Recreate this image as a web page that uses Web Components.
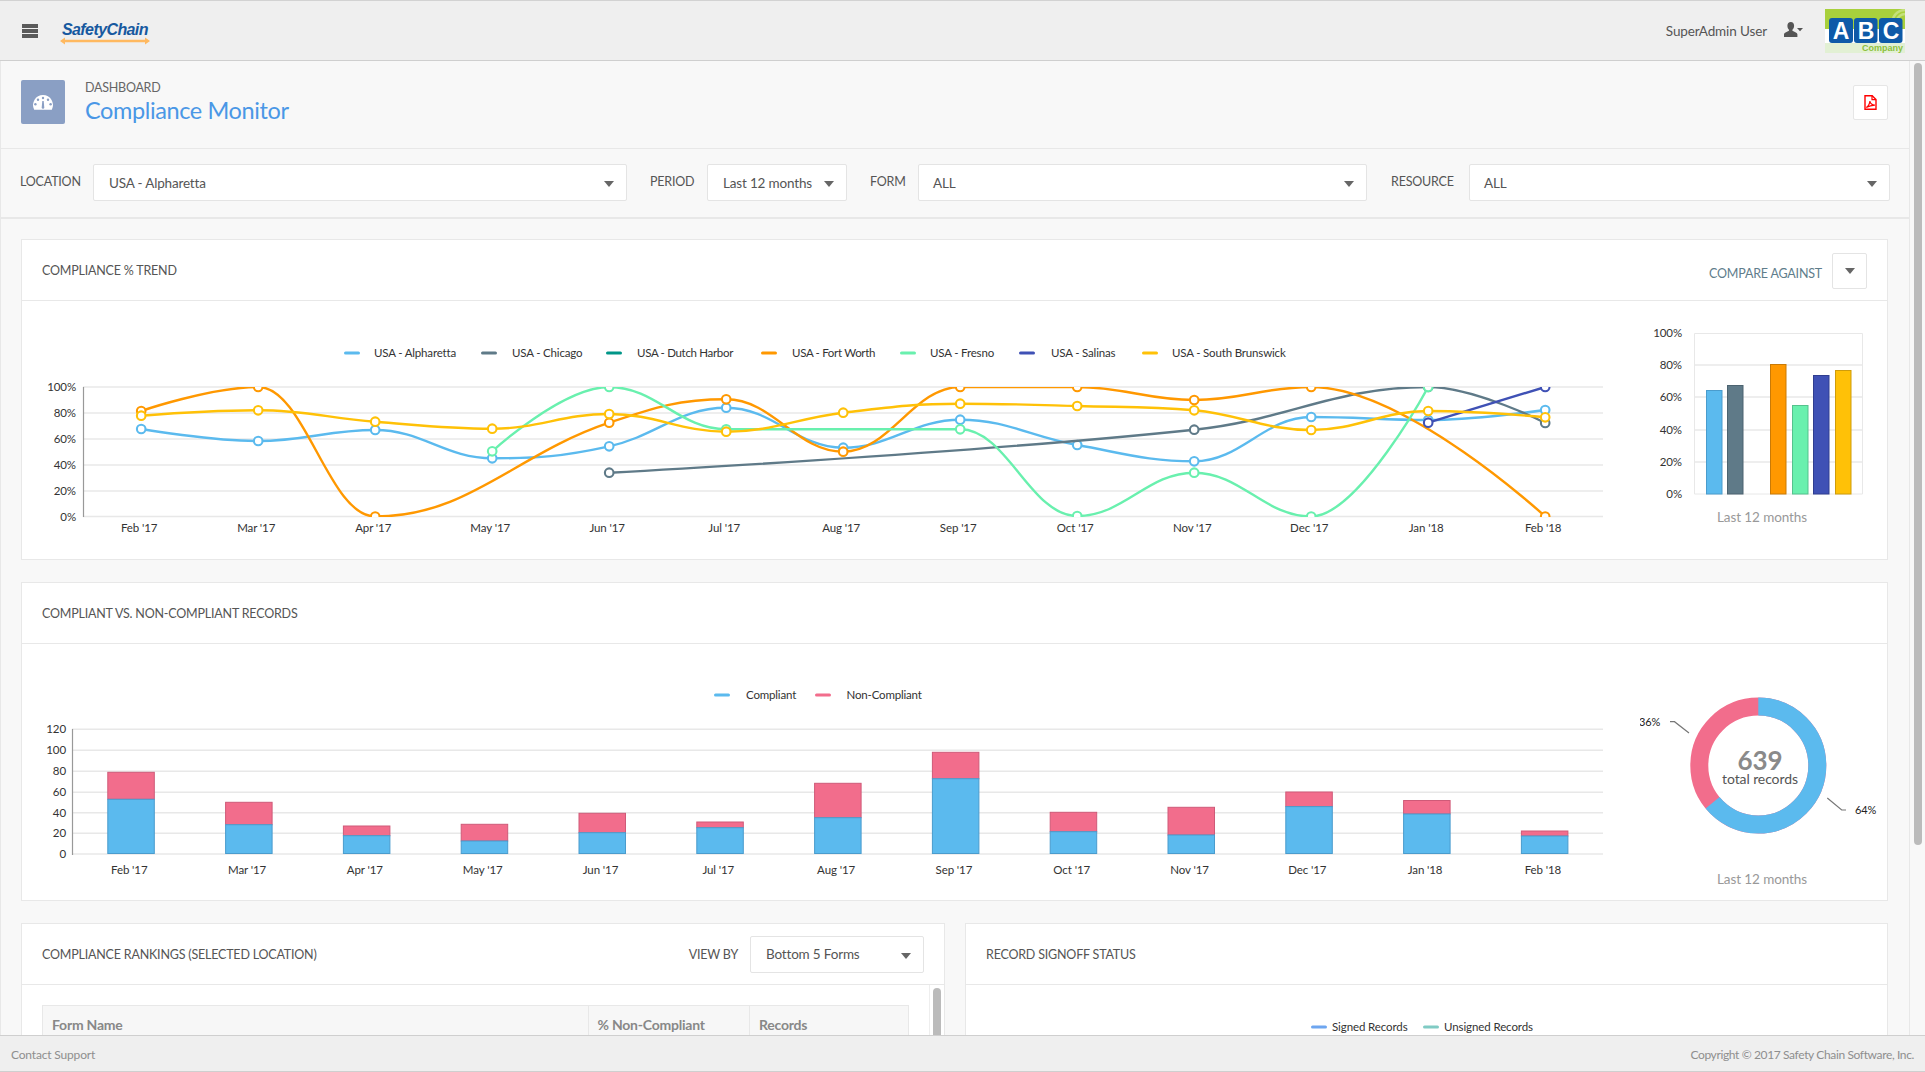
<!DOCTYPE html>
<html lang="en"><head><meta charset="utf-8"><title>Compliance Monitor</title>
<style>
html,body{margin:0;padding:0;height:100%;overflow:hidden;font-family:Lato,"Noto Sans",sans-serif;color:#555}
</style></head><body>
<sc-app></sc-app>
<script>
const FONT='Lato,"Noto Sans",sans-serif';
function def(name,css,html){
  customElements.define(name,class extends HTMLElement{
    constructor(){super();const r=this.attachShadow({mode:'open'});
      r.innerHTML='<style>'+css+'</style>'+(typeof html==='function'?html(this):html);}
  });
}
function spline(p){
  const s=1.5,den=2.5,n=p.length,lc=[],rc=[];
  for(let i=0;i<n;i++){
    const [x,y]=p[i];
    if(i===0||i===n-1){lc[i]=[x,y];rc[i]=[x,y];continue;}
    const [px,py]=p[i-1],[nx,ny]=p[i+1];
    let lx=(s*x+px)/den,ly=(s*y+py)/den,rx=(s*x+nx)/den,ry=(s*y+ny)/den;
    const c=((ry-ly)*(rx-x))/(rx-lx)+y-ry;ly+=c;ry+=c;
    if(ly>py&&ly>y){ly=Math.max(py,y);ry=2*y-ly}else if(ly<py&&ly<y){ly=Math.min(py,y);ry=2*y-ly}
    if(ry>ny&&ry>y){ry=Math.max(ny,y);ly=2*y-ry}else if(ry<ny&&ry<y){ry=Math.min(ny,y);ly=2*y-ry}
    lc[i]=[lx,ly];rc[i]=[rx,ry];
  }
  let d='M'+p[0][0]+' '+p[0][1];
  for(let i=1;i<n;i++)d+='C'+rc[i-1].join(' ')+' '+lc[i].join(' ')+' '+p[i].join(' ');
  return d;
}
const months=["Feb '17","Mar '17","Apr '17","May '17","Jun '17","Jul '17","Aug '17","Sep '17","Oct '17","Nov '17","Dec '17","Jan '18","Feb '18"];
const svgCss=`:host{display:block;flex:none}svg{display:block;overflow:hidden}text{font-family:${FONT};font-size:11.5px;fill:#333;letter-spacing:-.1px}
.cap{font-size:13.5px;fill:#999;letter-spacing:-.1px}.lg{font-size:11.5px;letter-spacing:-.17px}.lgt{font-size:11.5px;letter-spacing:-.32px}`;

def('sc-topbar',`:host{display:flex;align-items:center;box-sizing:border-box;border-top:1px solid #d2d2d2;background:#efefef;border-bottom:1px solid #cfcfcf;height:61px;padding-left:22px;flex:none;font-family:${FONT}}
.burger{width:16px;display:flex;flex-direction:column;gap:1px;margin-top:1px}.burger i{display:block;height:4px;background:#5a5a5a}
.logo{margin-left:22px;width:90px}
.logo span{display:block;font:italic bold 16px/20px "Liberation Sans",sans-serif;color:#17599f;letter-spacing:-.6px;padding-left:2px;margin-top:4px}
.logo svg{display:block;margin-top:-3px}
.sp{flex:1}.user{font-size:13.5px;color:#555;letter-spacing:-.12px}
.ui{margin:-2px 22px 0 17px;display:block}.abc{display:block;margin-right:20px;margin-top:1px}
.abc text{font-family:"Liberation Sans",sans-serif;font-weight:bold}`,
`<div class="burger"><i></i><i></i><i></i></div>
<div class="logo"><span>SafetyChain</span><svg width="90" height="8" viewBox="0 0 90 8"><path d="M4 4H86" stroke="#ffb960" stroke-width="2.4"/><path d="M0 4l5-3.6v7.2zM90 4l-5-3.6v7.2z" fill="#ffb960"/></svg></div>
<div class="sp"></div><div class="user">SuperAdmin User</div>
<svg class="ui" width="19" height="15" viewBox="0 0 19 15"><path d="M6.8 0c2.1 0 3.3 1.6 3.3 3.7 0 1.5-.6 3-1.5 3.9-.4.5-.3 1.2.3 1.5 1.9.9 4.5 1.7 4.5 3.2V15H0v-2.7c0-1.500 2.600-2.300 4.500-3.200.6-.3.700-1 .3-1.500C3.900 6.700 3.400 5.200 3.400 3.700 3.400 1.600 4.700 0 6.800 0z" fill="#555"/><path d="M13 6h6l-3 3.200z" fill="#555"/></svg>
<svg class="abc" width="80" height="44" viewBox="0 0 80 44"><rect width="80" height="20" fill="#a8d03c"/><rect y="20" width="80" height="14" fill="#fff"/><rect y="34" width="80" height="10" fill="#e2f0d4"/>
<path d="M68 9a14 14 0 0 1 12-8M72 11a9 9 0 0 1 8-6" stroke="#c4e07c" stroke-width="2.5" fill="none"/>
<g fill="#0e5aa8"><rect x="4" y="9" width="24" height="25" rx="3"/><rect x="29" y="9" width="23.5" height="25" rx="3"/><rect x="54" y="9" width="23.5" height="25" rx="3"/></g>
<g fill="#fff" font-size="23" text-anchor="middle"><text x="16" y="30">A</text><text x="41" y="30">B</text><text x="66" y="30">C</text></g>
<text x="78" y="42" text-anchor="end" font-size="9" fill="#8cc03c">Company</text></svg>`);

def('sc-page-head',`:host{display:flex;box-sizing:border-box;height:88px;padding:19px 21px 0 20px;border-bottom:1px solid #e8e8e8;background:#f8f8f8;flex:none}
.ic{width:44px;height:44px;background:#8a9fc4;border-radius:2px;display:flex;align-items:center;justify-content:center}
.t{margin:1px 0 0 20px;flex:1}.d{font-size:12.5px;line-height:14px;color:#666;letter-spacing:-.25px}.h{font-size:23.5px;line-height:30px;color:#4a97e6;letter-spacing:-.38px}
.pdf{width:35px;height:35px;box-sizing:border-box;background:#fff;border:1px solid #e6e6e6;border-radius:2px;margin-top:5px;display:flex;align-items:center;justify-content:center}`,
`<div class="ic"><svg width="22" height="15" viewBox="0 0 22 15"><path d="M2.2 14.75A10 10 0 1 1 19.8 14.75z" fill="#fff"/><g fill="#8a9fc4"><circle cx="11" cy="3" r="1.2"/><circle cx="6" cy="4.7" r="1.2"/><circle cx="16" cy="4.7" r="1.2"/><circle cx="3.4" cy="9.3" r="1.2"/><circle cx="18.6" cy="9.3" r="1.2"/><path d="M10.3 6h1.400l.6 6.500a1.300 1.300 0 1 1-2.600 0z"/></g></svg></div>
<div class="t"><div class="d">DASHBOARD</div><div class="h">Compliance Monitor</div></div>
<div class="pdf"><svg width="13" height="15" viewBox="0 0 13 15"><path d="M1 .7h7.200L12 4.500v9.800H1z" fill="none" stroke="#f00" stroke-width="1.4"/><path d="M8 .7v4h4" fill="none" stroke="#f00" stroke-width="1.2"/><path d="M2.200 12.500c2-1 3.300-3.500 3.700-6.300.4 2.200 2.200 3.800 5 3.900-2.800.1-6 .9-8.700 2.400z" fill="none" stroke="#f00" stroke-width="1.1"/></svg></div>`);

def('sc-select',`:host{display:flex;align-items:center;box-sizing:border-box;height:37px;background:#fff;border:1px solid #e4e4e4;border-radius:2px;padding:0 12px 0 15px;font-size:13.5px;color:#555;letter-spacing:-.17px;flex:none}
.v{flex:1;white-space:nowrap}.c{width:0;height:0;border:5.5px solid transparent;border-top:6.5px solid #666;border-bottom:0;margin-top:3px}`,
`<div class="v"><slot></slot></div><div class="c"></div>`);

def('sc-filter-bar',`:host{display:flex;align-items:center;box-sizing:border-box;height:70px;padding:0 0 1px 19px;border-bottom:2px solid #e8e8e8;background:#f8f8f8;flex:none}
.l{font-size:12.5px;color:#555;letter-spacing:-.2px;flex:none;margin-top:-2px}`,
`<div class="l" style="width:73px">LOCATION</div><sc-select style="width:534px">USA - Alpharetta</sc-select>
<div class="l" style="margin-left:23px;width:57px">PERIOD</div><sc-select style="width:140px">Last 12 months</sc-select>
<div class="l" style="margin-left:23px;width:48px">FORM</div><sc-select style="width:449px;padding-left:14px">ALL</sc-select>
<div class="l" style="margin-left:24px;width:78px">RESOURCE</div><sc-select style="width:421px;padding-left:14px">ALL</sc-select>`);

def('sc-card',`:host{display:block;box-sizing:border-box;background:#fff;border:1px solid #e8e8e8;min-width:0}
.hd{display:flex;align-items:center;height:60px;box-sizing:content-box;border-bottom:1px solid #e8e8e8;padding:0 20px}
.ti{flex:1;font-size:12.5px;color:#555;letter-spacing:-.2px;white-space:nowrap}`,
c=>`<div class="hd"><div class="ti">${c.getAttribute('heading')}</div><slot name="actions"></slot></div><slot></slot>`);

def('sc-compare',`:host{display:flex;align-items:center;margin-top:2px}
.l{font-size:12.5px;color:#607d8b;letter-spacing:-.2px;margin:5px 10px 0 0}
.b{width:35px;height:36px;box-sizing:border-box;border:1px solid #e4e4e4;border-radius:2px;display:flex;align-items:center;justify-content:center}
.b i{display:block;width:0;height:0;border:5.5px solid transparent;border-top:6.5px solid #666;border-bottom:0}`,
`<div class="l">COMPARE AGAINST</div><div class="b"><i></i></div>`);

def('sc-view-by',`:host{display:flex;align-items:center}.l{font-size:12.5px;color:#555;letter-spacing:-.2px;margin-right:12px}`,
`<div class="l">VIEW BY</div><sc-select style="width:174px">Bottom 5 Forms</sc-select>`);

def('sc-trend-chart',svgCss,()=>{
  const X=i=>141.2+117*i;
  let g='';
  [387,413,439,465,491,516.5].forEach((y,i)=>{
    g+=`<path d="M83 ${y}H1603" stroke="#e8e8e8" stroke-width="1.6"/><text x="76" y="${y+4}" text-anchor="end">${100-i*20}%</text>`;
  });
  g+=`<path d="M83.5 387V517" stroke="#999" stroke-width="1.2"/>`;
  months.forEach((m,i)=>g+=`<text x="${X(i)-2}" y="532" text-anchor="middle">${m}</text>`);
  const series=[
   ['#5bbaee',[[0,429],[1,441],[2,430],[3,458.3],[4,446.3],[5,407.7],[6,447.7],[7,419.7],[8,445],[9,461.3],[10,417],[11,420],[12,410]]],
   ['#5f7a88',[[4,472.7],[9,429.7],[11,387],[12,423]]],
   ['#ff9800',[[0,411],[1,387],[2,516.5],[4,422.7],[5,399.3],[6,451.7],[7,387],[8,387],[9,400],[10,387],[12,516.5]]],
   ['#69f0ae',[[3,451.3],[4,387],[5,429.3],[7,429.3],[8,516],[9,472.7],[10,516.5],[11,387]]],
   ['#3f51b5',[[11,422.7],[12,387]]],
   ['#ffc107',[[0,415.7],[1,410.3],[2,421.7],[3,428.7],[4,414],[5,431.7],[6,412.7],[7,403.7],[8,406],[9,410.3],[10,430],[11,411],[12,417.3]]]
  ];
  let s='';
  series.forEach(([c,pts])=>{
    const p=pts.map(([i,y])=>[+X(i).toFixed(1),y]);
    s+=`<path d="${spline(p)}" fill="none" stroke="${c}" stroke-width="2.4"/>`;
    p.forEach(q=>s+=`<circle cx="${q[0]}" cy="${q[1]}" r="4.3" fill="#fff" stroke="${c}" stroke-width="2.1"/>`);
  });
  const lg=[[344,374,'#5bbaee','USA - Alpharetta','lg'],[481,512,'#5f7a88','USA - Chicago','lg'],[606,637,'#009688','USA - Dutch Harbor','lgt'],[761,792,'#ff9800','USA - Fort Worth','lgt'],[900,930,'#69f0ae','USA - Fresno','lg'],[1019,1051,'#3f51b5','USA - Salinas','lg'],[1142,1172,'#ffc107','USA - South Brunswick','lg']];
  let l='';
  lg.forEach(([a,b,c,t,k])=>l+=`<rect x="${a}" y="351.5" width="16" height="3" rx="1.5" fill="${c}"/><text class="${k}" x="${b}" y="357">${t}</text>`);
  return `<svg width="1618" height="258" viewBox="22 301 1618 258"><defs><clipPath id="p"><rect x="83" y="387" width="1525" height="130"/></clipPath></defs>${g}${l}<g clip-path="url(#p)">${s}</g></svg>`;
});

def('sc-compare-bars',svgCss,()=>{
  let g='<path d="M1694.5 333.5H1862.5V494H1694.5z" fill="none" stroke="#e8e8e8"/>';
  [365,397,430,462].forEach(y=>g+=`<path d="M1694 ${y}H1863" stroke="#e8e8e8" stroke-width="1.5"/>`);
  [[333,100],[365,80],[397,60],[430,40],[462,20],[494,0]].forEach(([y,v])=>g+=`<text x="1682" y="${y+4}" text-anchor="end">${v}%</text>`);
  [[1706,390,'#5bbaee','#4a9ccd'],[1727,385,'#5f7a88','#4c6370'],[1770,364,'#ff9800','#c97a06'],[1792,405,'#69f0ae','#55c28d'],[1813,375,'#3f51b5','#303e90'],[1835,370,'#ffc107','#cf9c0a']].forEach(([x,y,c,e])=>{
    g+=`<rect x="${x+.5}" y="${y+.5}" width="15.5" height="${493.5-y}" fill="${c}" stroke="${e}"/>`;
  });
  g+=`<text class="cap" x="1762" y="522" text-anchor="middle">Last 12 months</text>`;
  return `<svg width="247" height="258" viewBox="1640 301 247 258">${g}</svg>`;
});

def('sc-stacked-chart',svgCss,()=>{
  let g='';
  [729.3,750.3,771.3,792.3,812.7,833.3,854].forEach((y,i)=>{
    g+=`<path d="M72 ${y}H1603" stroke="#e8e8e8" stroke-width="1.6"/><text x="66" y="${y+4}" text-anchor="end">${120-i*20}</text>`;
  });
  g+=`<path d="M72.5 729V855" stroke="#999" stroke-width="1.2"/>`;
  const d=[[772.3,799.3],[802.3,824.7],[826,835.7],[824.3,841],[813.3,832.7],[822,827.7],[783.3,817.7],[752.3,778.7],[812.3,831.7],[807.3,835],[792,806.6],[800.5,814],[831,836]];
  d.forEach(([a,b],i)=>{
    const x=107.8+117.8*i;
    g+=`<rect x="${x}" y="${a}" width="46.5" height="${b-a}" fill="#f26d8c" stroke="#cf5a78" stroke-width="1"/>`;
    g+=`<rect x="${x}" y="${b}" width="46.5" height="${853.5-b}" fill="#5bbaee" stroke="#4a9ccd" stroke-width="1"/>`;
    g+=`<text x="${x+21.5}" y="874" text-anchor="middle">${months[i]}</text>`;
  });
  g+=`<rect x="714" y="693.5" width="16" height="3" rx="1.5" fill="#5bbaee"/><text class="lg" x="746" y="699">Compliant</text>
  <rect x="815" y="693.5" width="16" height="3" rx="1.5" fill="#f26d8c"/><text class="lg" x="846.5" y="699">Non-Compliant</text>`;
  return `<svg width="1618" height="256" viewBox="22 644 1618 256">${g}</svg>`;
});

def('sc-donut',svgCss+`.n{font-size:26px;font-weight:bold;fill:#8a8a8a}.s{font-size:14px;fill:#555}.pc{font-size:11px;fill:#222}`,()=>{
  const r=59,c=2*Math.PI*r;
  return `<svg width="247" height="256" viewBox="1640 644 247 256">
  <circle cx="1758.3" cy="765.5" r="${r}" fill="none" stroke="#f26d8c" stroke-width="18"/>
  <circle cx="1758.3" cy="765.5" r="${r}" fill="none" stroke="#5bbaee" stroke-width="18" stroke-dasharray="${c*.64} ${c}" transform="rotate(-90 1758.3 765.5)"/>
  <text class="n" x="1760" y="770" text-anchor="middle">639</text>
  <text class="s" x="1760" y="783.5" text-anchor="middle">total records</text>
  <path d="M1670 721.7H1674.5L1689 733M1827.3 798L1841.7 810H1846" fill="none" stroke="#777" stroke-width="1.2"/>
  <text class="pc" x="1639" y="726">36%</text><text class="pc" x="1855" y="814">64%</text>
  <text class="cap" x="1762" y="884" text-anchor="middle">Last 12 months</text></svg>`;
});

def('sc-rankings',`:host{display:flex;height:300px;padding:20px 0 0 20px;box-sizing:border-box}
.t{display:grid;grid-template-columns:544.5px 161.5px 161px;flex:none;height:42px;box-sizing:border-box;border:1px solid #e8e8e8;background:#f7f7f7;width:867px}
.t div{display:flex;align-items:center;padding-left:9px;font-size:14px;font-weight:bold;color:#888;letter-spacing:-.22px;border-left:1px solid #e8e8e8;height:36px;box-sizing:border-box}
.t div:first-child{border-left:0}
.tr{margin:-20px 0 0 20px;border-left:1px solid #eee;width:15px;flex:none}.tr i{display:block;width:8px;height:220px;border-radius:4px;background:#bbb;margin:3px 0 0 3px}`,
`<div class="t"><div>Form Name</div><div>% Non-Compliant</div><div>Records</div></div><div class="tr"><i></i></div>`);

def('sc-signoff',`:host{display:block;height:300px}svg{display:block}text{font-family:${FONT};font-size:11.5px;fill:#333;letter-spacing:-.1px}`,
`<svg width="921" height="60" viewBox="966 985 921 60"><rect x="1311" y="1025.5" width="16" height="3" rx="1.5" fill="#6ea6f0"/><text x="1332" y="1031">Signed Records</text><rect x="1423" y="1025.5" width="16" height="3" rx="1.5" fill="#80cbc4"/><text x="1444" y="1031">Unsigned Records</text></svg>`);

def('sc-footer',`:host{display:flex;align-items:center;justify-content:space-between;height:37px;box-sizing:border-box;padding:1px 11px 0;border-top:1px solid #cfcfcf;border-bottom:1px solid #cfcfcf;background:#efefef;font-size:12px;color:#8e8e8e;flex:none}
.a{letter-spacing:-.17px}.b{letter-spacing:-.37px}`,
`<span class="a">Contact Support</span><span class="b">Copyright © 2017 Safety Chain Software, Inc.</span>`);

def('sc-app',`:host{display:flex;flex-direction:column;height:1072px;width:1925px;overflow:hidden;background:#f8f8f8}
.m{flex:1;display:flex;min-height:0;overflow:hidden}
.c{width:1910px;flex:none;box-sizing:border-box;border-left:1px solid #e8e8e8;border-right:1px solid #e8e8e8;height:1400px}
.cards{padding:20px 21px 0 20px;display:flex;flex-direction:column;gap:22px}
.row{display:flex}
.two{display:grid;grid-template-columns:924px 923px;gap:20px}
.gut{flex:1;background:#f8f8f8}.gut i{display:block;width:8px;height:782px;margin:2px 0 0 4px;background:#bbb;border-radius:4px}`,
`<sc-topbar></sc-topbar>
<div class="m"><div class="c"><sc-page-head></sc-page-head><sc-filter-bar></sc-filter-bar>
<div class="cards">
<sc-card heading="COMPLIANCE % TREND"><sc-compare slot="actions"></sc-compare><div class="row"><sc-trend-chart></sc-trend-chart><sc-compare-bars></sc-compare-bars></div></sc-card>
<sc-card heading="COMPLIANT VS. NON-COMPLIANT RECORDS"><div class="row"><sc-stacked-chart></sc-stacked-chart><sc-donut></sc-donut></div></sc-card>
<div class="two"><sc-card heading="COMPLIANCE RANKINGS (SELECTED LOCATION)"><sc-view-by slot="actions"></sc-view-by><sc-rankings></sc-rankings></sc-card>
<sc-card heading="RECORD SIGNOFF STATUS"><sc-signoff></sc-signoff></sc-card></div>
</div></div><div class="gut"><i></i></div></div>
<sc-footer></sc-footer>`);
</script>
</body></html>
